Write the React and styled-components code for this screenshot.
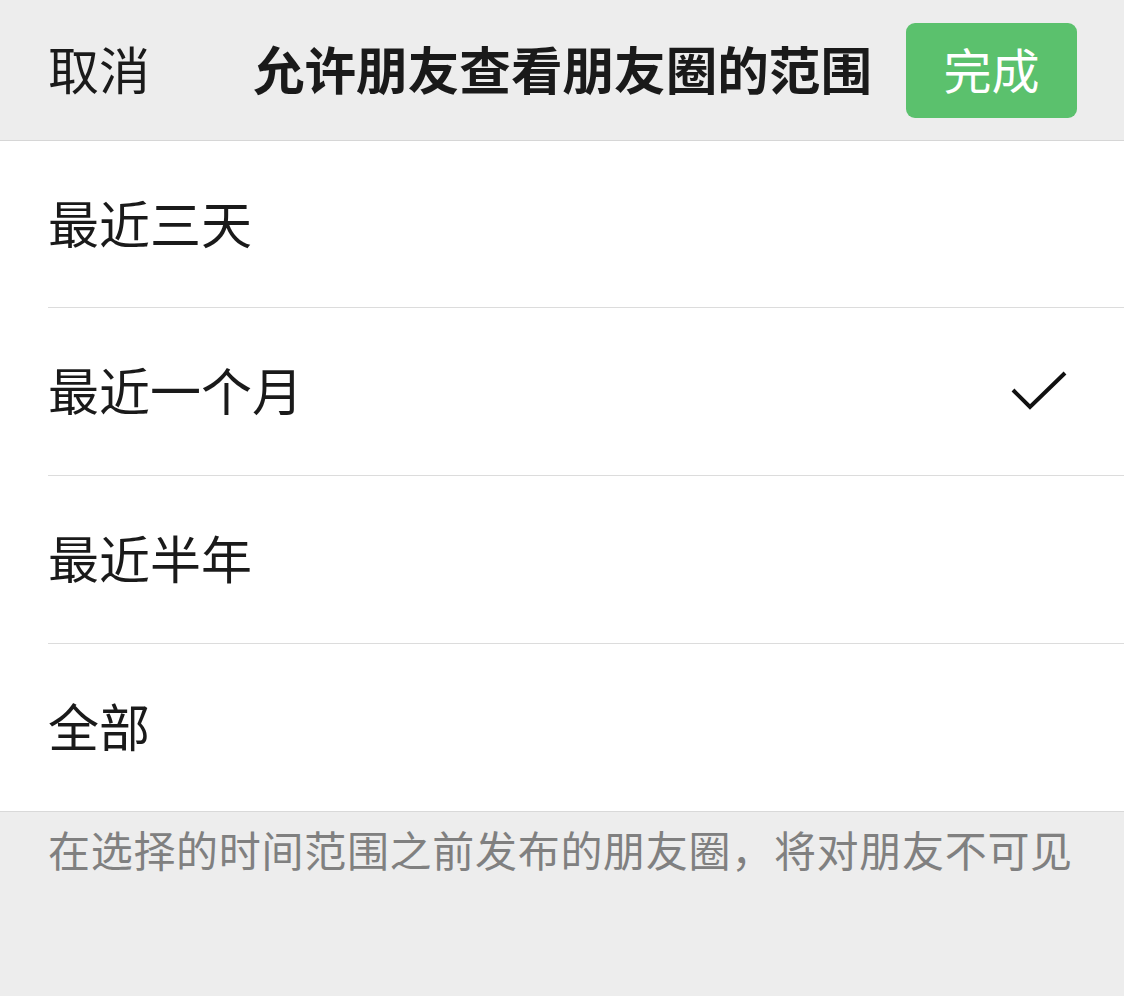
import styled, { createGlobalStyle } from 'styled-components';

const GlobalStyle = createGlobalStyle`
    html, body {
        margin: 0;
        padding: 0;
        background: #ededed;
    }
    body {
        font-family: "Noto Sans CJK SC", "Noto Sans", sans-serif;
        color: #1a1a1a;
    }
`;

const Page = styled.div`
    width: 1124px;
    min-height: 996px;
    background: #ededed;
`;

const Header = styled.header`
    height: 140px;
    display: grid;
    grid-template-columns: 1fr auto 1fr;
    align-items: center;
    padding: 0 47px 0 48px;
    border-bottom: 1px solid #d6d6d6;
`;

const Cancel = styled.div`
    font-size: 51px;
    line-height: 1;
    justify-self: start;
    margin-bottom: 4px;
`;

const Title = styled.h1`
    margin: 0 0 4px;
    font-size: 51.6px;
    font-weight: 700;
    line-height: 1;
`;

const DoneButton = styled.button`
    justify-self: end;
    width: 171px;
    height: 95px;
    border: none;
    border-radius: 9px;
    background: #5bc16d;
    color: #fff;
    font-family: inherit;
    font-size: 48px;
    line-height: 1;
    padding: 0 0 6px;
    margin-top: 1px;
`;

const List = styled.ul`
    list-style: none;
    margin: 0;
    padding: 0 0 0 48px;
    background: #fff;
    border-bottom: 1px solid #d9d9d9;
`;

const Row = styled.li`
    height: 167px;
    display: flex;
    align-items: center;
    justify-content: space-between;
    padding-right: 56px;
    font-size: 51px;
    line-height: 1;
    & > span {
        margin-bottom: 4px;
    }
    & + & {
        border-top: 1px solid #dcdcdc;
    }
    &:first-child {
        height: 166px;
    }
`;

const Note = styled.p`
    margin: 0;
    padding: 10px 0 0 48px;
    font-size: 42px;
    line-height: 1.3;
    color: #808080;
    letter-spacing: 0.7px;
`;

const Check = () => (
    <svg width="58" height="42" viewBox="0 0 58 42" fill="none">
        <path d="M3 19 L20 36 L55 2" stroke="#111" strokeWidth="4" />
    </svg>
);

const options = ['最近三天', '最近一个月', '最近半年', '全部'];

const App = () => {
    const selected = 1;
    return (
        <Page>
            <GlobalStyle />
            <Header>
                <Cancel>取消</Cancel>
                <Title>允许朋友查看朋友圈的范围</Title>
                <DoneButton>完成</DoneButton>
            </Header>
            <List>
                {options.map((o, i) => (
                    <Row key={o}>
                        <span>{o}</span>
                        {i === selected && <Check />}
                    </Row>
                ))}
            </List>
            <Note>在选择的时间范围之前发布的朋友圈，将对朋友不可见</Note>
        </Page>
    );
};

export default App;
